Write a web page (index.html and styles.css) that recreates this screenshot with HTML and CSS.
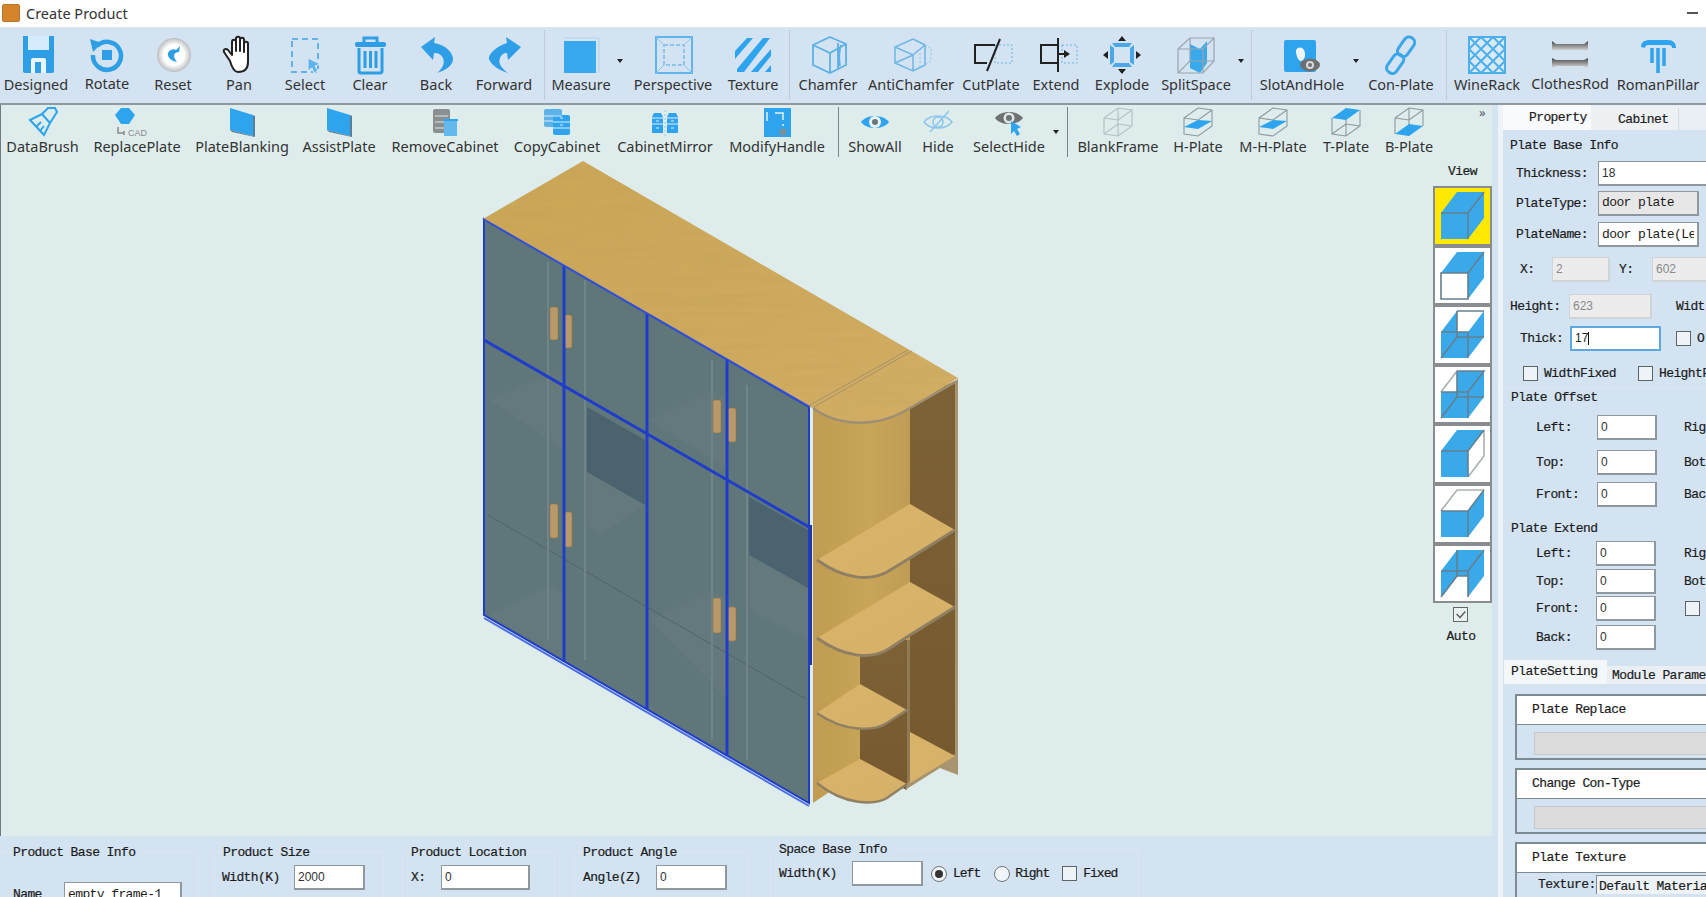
FILE: index.html
```html
<!DOCTYPE html>
<html lang="en">
<head>
<meta charset="utf-8">
<title>Create Product</title>
<link rel="stylesheet" href="styles.css">
</head>
<body>
<div class="app">
  <header class="titlebar">
    <span class="appicon"></span><span class="apptitle">Create Product</span><span class="minimize"></span>
  </header>

  <nav class="ribbon">
    <div class="tool w72"><svg class="ico" viewBox="0 0 40 40"><path d="M7 1H38V36Q38 38 36 38H9Q7 38 7 36Z" fill="#2e9fe6"/><rect x="12" y="1" width="21" height="14" fill="#d4ecfb"/><path d="M15 38V25Q15 23 17 23H28Q30 23 30 25V38Z" fill="#eaf4fb"/><rect x="19" y="27" width="6" height="11" fill="#2e9fe6"/></svg><span class="label">Designed</span></div>
    <div class="tool w70 up"><svg class="ico" viewBox="0 0 40 40"><path d="M10 11A14 14 0 1 1 6 20" fill="none" stroke="#2e9fe6" stroke-width="4.5"/><path d="M3 4L15 8 6 17Z" fill="#2e9fe6"/><rect x="15" y="15" width="10" height="10" fill="#2e9fe6"/></svg><span class="label">Rotate</span></div>
    <div class="tool w62"><svg class="ico" viewBox="0 0 40 40"><defs><radialGradient id="ball" cx=".5" cy=".5" r=".55"><stop offset=".55" stop-color="#fff"/><stop offset="1" stop-color="#a9adb0"/></radialGradient></defs><circle cx="21" cy="20" r="17" fill="url(#ball)"/><path d="M27 11L26 17C21 17 19 21 24 27 18 26 14 22 15 18 16 15 21 13 23 15Z" fill="#2e9fe6"/></svg><span class="label">Reset</span></div>
    <div class="tool w70"><svg class="ico" viewBox="0 0 40 40"><path d="M11 26L5 17C4 14 7 13 9 15L13 20V7C13 4 17 4 17 7V16 4C17 1 21 1 21 4V16 5C21 2 25 2 25 5V17 9C25 6 29 6 29 9V27C29 34 25 37 19 37 15 37 13 33 11 26Z" fill="#fff" stroke="#222" stroke-width="2" stroke-linejoin="round"/></svg><span class="label">Pan</span></div>
    <div class="tool w62"><svg class="ico" viewBox="0 0 40 40"><rect x="7" y="4" width="26" height="33" fill="none" stroke="#62b3ec" stroke-width="2" stroke-dasharray="6 4"/><path d="M23 23L35 29 30 31 33 36 29 38 27 33 23 36Z" fill="#5fb3ee" stroke="#dbe9f5"/></svg><span class="label">Select</span></div>
    <div class="tool w68"><svg class="ico" viewBox="0 0 40 40"><path d="M14 8V3H27V8" fill="none" stroke="#2e9fe6" stroke-width="3"/><rect x="5" y="7" width="31" height="5" rx="2" fill="#2e9fe6"/><path d="M9 13V36Q9 38 11 38H30Q32 38 32 36V13M15 16V33M20.500 16V33M26 16V33" fill="none" stroke="#2e9fe6" stroke-width="3"/></svg><span class="label">Clear</span></div>
    <div class="tool w64"><svg class="ico" viewBox="0 0 40 40"><path d="M5 12L19 2 18 8C30 10 37 18 37 24 37 31 28 36 21 38 27 33 29 28 27 23 25 19 22 18 18 18L17 25Z" fill="#2e9fe6"/></svg><span class="label">Back</span></div>
    <div class="tool w72"><svg class="ico" viewBox="0 0 40 40"><path d="M37 12L22 2 23 8C11 12 4 20 5 24 7 30 16 36 24 38 17 33 14 28 16 23 18 19 20 18 23 18L24 25Z" fill="#2e9fe6"/></svg><span class="label">Forward</span></div>
    <i class="sep ml4 mr2"></i>
    <div class="tool w68"><svg class="ico" viewBox="0 0 40 40"><rect x="3" y="6" width="32" height="32" fill="#39a9ee"/><path d="M3 3H38V38" fill="none" stroke="#b5d2e8"/></svg><span class="label">Measure</span></div>
    <i class="caretdown w10"></i>
    <div class="tool w96"><svg class="ico" viewBox="0 0 40 40"><rect x="3" y="2" width="36" height="36" fill="none" stroke="#5fb5ee" stroke-width="2"/><rect x="11" y="10" width="20" height="20" fill="none" stroke="#8cc6ee" stroke-width="2" stroke-dasharray="4 2"/><path d="M3 2L11 10M39 2L31 10M3 38L11 30M39 38L31 30" stroke="#8cc6ee"/></svg><span class="label">Perspective</span></div>
    <div class="tool w64"><svg class="ico" viewBox="0 0 40 40"><path d="M2 16L14 3H20L2 24ZM4 34L30 3H37L11 37H4ZM18 37L38 14V21L25 37ZM32 37L38 30V37Z" fill="#2ea3ee"/></svg><span class="label">Texture</span></div>
    <i class="sep ml4"></i>
    <div class="tool w76"><svg class="ico shift" viewBox="0 0 40 40"><path d="M20 2L36 9V30L20 38 3 30V10ZM3 10L20 18 36 9M20 18V38M28 8V34M31 10Q28 20 30 31" fill="none" stroke="#5db0e6" stroke-width="1.800"/></svg><span class="label">Chamfer</span></div>
    <div class="tool w90"><svg class="ico shift" viewBox="0 0 40 40"><path d="M20 4L32 10V30L20 36 2 28V12ZM2 12L20 20 32 10M20 20V36M2 28L20 20" fill="none" stroke="#6db6e6" stroke-width="1.500"/><path d="M32 10L38 13V26L32 30M27 14V32" fill="none" stroke="#8cc6ee" stroke-dasharray="2 2"/></svg><span class="label">AntiChamfer</span></div>
    <div class="tool w70"><svg class="ico shift" viewBox="0 0 40 40"><rect x="22" y="10" width="17" height="18" fill="none" stroke="#6db6e6" stroke-dasharray="2 2"/><path d="M22 10H2V28H14M27 4L14 36" fill="none" stroke="#222" stroke-width="2"/></svg><span class="label">CutPlate</span></div>
    <div class="tool w60"><svg class="ico shift" viewBox="0 0 40 40"><rect x="24" y="10" width="15" height="18" fill="none" stroke="#6db6e6" stroke-dasharray="2 2"/><path d="M21 10H3V28H21M20 3V37M20 19H27" fill="none" stroke="#222" stroke-width="2"/><path d="M26 15L32 19 26 23Z" fill="#222"/></svg><span class="label">Extend</span></div>
    <div class="tool w72"><svg class="ico" viewBox="0 0 40 40"><path d="M10 8H30L27 12H13ZM10 32H30L27 28H13ZM8 10L12 13V27L8 30ZM32 10L28 13V27L32 30Z" fill="#4aa8e8"/><path d="M20 1L24 6H16ZM20 39L16 34H24ZM1 20L6 16V24ZM39 20L34 24V16Z" fill="#222"/></svg><span class="label">Explode</span></div>
    <div class="tool w76"><svg class="ico" viewBox="0 0 40 40"><path d="M14 9L24 14 31 6V28L24 38 14 33Z" fill="#39a9ee"/><path d="M2 14L14 3H38V26L27 38H2ZM2 14H27L38 3M27 14V38M14 3V26L2 38M14 26H38" fill="none" stroke="#9aa6ad" stroke-width="1.200"/></svg><span class="label">SplitSpace</span></div>
    <i class="caretdown w14"></i>
    <i class="sep ml3"></i>
    <div class="tool w100"><svg class="ico" viewBox="0 0 40 40"><rect x="2" y="5" width="32" height="32" rx="2" fill="#2ea3ee"/><path d="M14 16C14 12 20 11 22 15 24 19 23 25 19 26 16 26 14 20 14 16Z" fill="#eef6fc"/><ellipse cx="28" cy="30" rx="10" ry="6.500" fill="#6c7072"/><circle cx="28" cy="30" r="4" fill="#d8d8d8"/><circle cx="28" cy="30" r="2" fill="#6c7072"/></svg><span class="label">SlotAndHole</span></div>
    <i class="caretdown w8"></i>
    <div class="tool w82"><svg class="ico" viewBox="0 0 40 40"><g fill="none" stroke="#3aa6e8" stroke-width="3"><rect x="20" y="1" width="11" height="21" rx="5" transform="rotate(35 25 11)"/><rect x="9" y="18" width="11" height="21" rx="5" transform="rotate(35 14 28)"/></g></svg><span class="label">Con-Plate</span></div>
    <i class="sep ml4"></i>
    <div class="tool w80"><svg class="ico" viewBox="0 0 40 40"><rect x="2" y="2" width="36" height="36" fill="#dbe9f5" stroke="#4cb0ee" stroke-width="2"/><path d="M2 14L14 2M2 26L26 2M2 38L38 2M14 38L38 14M26 38L38 26M2 26L14 38M2 14L26 38M2 2L38 38M14 2L38 26M26 2L38 14" stroke="#4cb0ee" stroke-width="2"/></svg><span class="label">WineRack</span></div>
    <div class="tool w86 up"><svg class="ico" viewBox="0 0 40 40"><defs><linearGradient id="rod" x1="0" y1="0" x2="0" y2="1"><stop offset="0" stop-color="#444"/><stop offset=".5" stop-color="#999"/><stop offset="1" stop-color="#eee"/></linearGradient></defs><path d="M2 6L6 9H34L38 6V17L34 15H6L2 17Z" fill="url(#rod)"/><path d="M2 23L6 25H34L38 23V34L34 31H6L2 34Z" fill="url(#rod)"/></svg><span class="label">ClothesRod</span></div>
    <div class="tool w90"><svg class="ico" viewBox="0 0 40 40"><path d="M3 12C3 6 8 5 12 5H30C35 5 38 8 38 13H34C34 10 32 10 30 10H11C8 10 7 11 7 13Z" fill="#2ea3ee"/><path d="M14 13V28M20 13V38M26 13V31" stroke="#2ea3ee" stroke-width="3.500" fill="none"/></svg><span class="label">RomanPillar</span></div>
  </nav>

  <div class="main">
    <div class="left">
      <section class="workspace">
        <svg class="scene" viewBox="0 105 1492 731">
          <defs>
            <linearGradient id="topwood" x1="0" y1="0" x2="1" y2="1"><stop offset="0" stop-color="#cba657"/><stop offset=".6" stop-color="#cfaa5e"/><stop offset="1" stop-color="#d3af66"/></linearGradient>
            <linearGradient id="sidewood" x1="0" y1="0" x2="1" y2="0"><stop offset="0" stop-color="#c09c52"/><stop offset=".6" stop-color="#c9a559"/><stop offset="1" stop-color="#bf9c55"/></linearGradient>
            <linearGradient id="shelfwood" x1="0" y1="0" x2="1" y2="1"><stop offset="0" stop-color="#d8b469"/><stop offset="1" stop-color="#d6b068"/></linearGradient>
            <linearGradient id="dark" x1="0" y1="0" x2="0" y2="1"><stop offset="0" stop-color="#7d6137"/><stop offset="1" stop-color="#76592f"/></linearGradient>
            <filter id="grain" x="0" y="0" width="100%" height="100%"><feTurbulence type="fractalNoise" baseFrequency=".012 .16" numOctaves="2" seed="4"/><feColorMatrix values="0 0 0 0 .45  0 0 0 0 .3  0 0 0 0 .1  0 0 0 .3 -.09"/><feComposite in2="SourceGraphic" operator="in"/><feMerge><feMergeNode in="SourceGraphic"/><feMergeNode/></feMerge></filter>
          </defs>

          <!-- right open unit -->
          <path d="M955 383L958 378V775L955 772Z" fill="#a8946e"/>
          <path d="M905 405L955 381V757L905 787Z" fill="url(#dark)"/>
          <path d="M813 408C835 425 875 430 910 408V640L907 786 860 770 825 795 813 803Z" fill="url(#sidewood)"/>
          <path d="M860 640H907V790L860 770Z" fill="url(#dark)"/>
          <path d="M907 640H910V786H907Z" fill="#8e7a55"/>
          <!-- shelves -->
          <path d="M958 775L955 754 908 782 905 790 940 768Z" fill="#a8946e"/>
          <path d="M910 732L955 756 910 783Z" fill="url(#shelfwood)"/>
          <g fill="url(#shelfwood)">
            <path d="M817 783L860 759 907 784 887 798C875 805 845 806 817 783Z"/>
            <path d="M817 713L860 684 907 710 887 723C875 731 845 733 817 713Z"/>
            <path d="M817 638L910 582 955 607 910 635 887 650C870 659 845 658 817 638Z"/>
            <path d="M817 560L910 504 955 530 910 558 887 572C870 581 845 580 817 560Z"/>
          </g>
          <g fill="none" stroke="#8f8064" stroke-linejoin="round">
            <path d="M817 783C845 806 875 805 887 798L907 784" stroke-width="2.500"/>
            <path d="M817 713C845 733 875 731 887 723L907 710" stroke-width="2.500"/>
            <path d="M817 638C845 658 870 659 887 650L910 635 955 607" stroke-width="3"/>
            <path d="M817 560C845 580 870 581 887 572L910 558 955 530" stroke-width="3"/>
          </g>

          <!-- glass doors -->
          <path d="M483 219L809 406V803L483 615Z" fill="#607779"/>
          <path d="M587 407L645 440V505L587 472ZM749 497L808 530V588L749 555Z" fill="#4a636e"/>
          <path d="M490 400L550 372 564 380V450ZM650 420L712 390 727 398V470ZM490 615L550 585 564 593V660ZM587 472L645 505 600 535 587 525ZM650 620L712 590 727 598V700ZM750 555L808 588 808 640 750 610Z" fill="#6b7d80" opacity=".3"/>
          <path d="M488 515L806 699" stroke="#506569" fill="none"/>
          <path d="M548 262V640M585 280V660M712 360V740M747 385V760" stroke="#708588" stroke-width="2" fill="none"/>
          <!-- door handles -->
          <g fill="#b9996a" stroke="#93713f" stroke-width=".5">
            <rect x="550" y="307" width="8" height="33" rx="2"/><rect x="564" y="315" width="8" height="33" rx="2"/>
            <rect x="713" y="400" width="8" height="33" rx="2"/><rect x="728" y="408" width="8" height="34" rx="2"/>
            <rect x="550" y="504" width="8" height="34" rx="2"/><rect x="564" y="512" width="8" height="35" rx="2"/>
            <rect x="713" y="598" width="8" height="35" rx="2"/><rect x="728" y="607" width="8" height="34" rx="2"/>
          </g>
          <!-- selection outline -->
          <g fill="none" stroke="#1f3ccb" stroke-width="2">
            <path d="M484 219L809 407V803L484 615Z"/>
            <path d="M484 340L809 527" stroke-width="3"/>
            <path d="M564 266V662M647 313V709M727 359V756" stroke-width="3"/>
            <path d="M484 618L809 806" stroke="#4c6ee0"/>
            <path d="M811 525V665" stroke="#26389a"/>
          </g>
          <!-- top board -->
          <path d="M583 161L958 378 910 408C875 430 835 425 813 408L810 407 483 219Z" fill="url(#topwood)" filter="url(#grain)"/>
          <path d="M813 408C835 425 875 430 910 408L957 381" fill="none" stroke="#9c8f73" stroke-width="2.500"/>
          <path d="M912 351L814 407M908 350L810 405" stroke="#a8926a" fill="none"/>
          <path d="M483 219L810 407" stroke="#3350d8" stroke-width="2" fill="none"/>
        </svg>

        <div class="toolbar2">
          <div class="tool2 w83"><svg class="ico2" viewBox="0 0 30 30"><g fill="none" stroke="#2ea3ee" stroke-width="2"><path d="M2 13L14 7 22 16 16 28Z"/><path d="M14 7L20 1 27 1 29 5 22 16M8 20L13 15M12 24L16 19"/></g></svg><span class="label">DataBrush</span></div>
          <div class="tool2 w106"><svg class="ico2 wide" viewBox="0 0 50 30"><path d="M9 1H17L23 8 17 17H9L3 8Z" fill="#2ea3ee"/><path d="M6 20V26H12M12 24V28" fill="none" stroke="#8a8a8a" stroke-width="1.500"/><text class="cad" x="16" y="29">CAD</text></svg><span class="label">ReplacePlate</span></div>
          <div class="tool2 w104"><svg class="ico2" viewBox="0 0 30 30"><path d="M3 1L26 8V29L3 23Z" fill="#2ea3ee"/><path d="M26 8L28 9V30L26 29ZM3 23L26 29 28 30 5 25Z" fill="#5d7d94"/></svg><span class="label">PlateBlanking</span></div>
          <div class="tool2 w90"><svg class="ico2" viewBox="0 0 30 30"><path d="M3 1L26 8V29L3 23Z" fill="#2ea3ee"/><path d="M26 8L28 9V30L26 29ZM3 23L26 29 28 30 5 25Z" fill="#5d7d94"/></svg><span class="label">AssistPlate</span></div>
          <div class="tool2 w122"><svg class="ico2" viewBox="0 0 30 30"><rect x="3" y="2" width="17" height="24" rx="2" fill="#8a8f92"/><path d="M5 9H18M5 15H18M5 21H18" stroke="#e2e6e8"/><rect x="14" y="14" width="13" height="15" fill="#63b8ee"/><path d="M13 13H28" stroke="#2ea3ee" stroke-width="2"/></svg><span class="label">RemoveCabinet</span></div>
          <div class="tool2 w102"><svg class="ico2" viewBox="0 0 30 30"><rect x="2" y="2" width="18" height="18" rx="2" fill="#5cb3ea"/><rect x="11" y="8" width="17" height="20" rx="2" fill="#2ea3ee"/><path d="M2 9H20M2 14H11M11 15H28M11 21H28M18 11H21M18 18H21" stroke="#e2eef8"/></svg><span class="label">CopyCabinet</span></div>
          <div class="tool2 w114"><svg class="ico2" viewBox="0 0 30 30"><path d="M2 10L4 6H11L13 10V26H2ZM17 10L19 6H26L28 10V26H17Z" fill="#2ea3ee"/><path d="M2 11H13M2 17H13M17 11H28M17 17H28M6 14H9M6 21H9M21 14H24M21 21H24" stroke="#e2eef8"/><path d="M15 3V29" stroke="#9ac8ea" stroke-dasharray="2 2"/></svg><span class="label">CabinetMirror</span></div>
          <div class="tool2 w110"><svg class="ico2" viewBox="0 0 30 30"><rect x="2" y="1" width="27" height="29" fill="#2ea3ee"/><path d="M5 5V14M13 6H21V13M21 17V19" fill="none" stroke="#eaf4fb" stroke-width="1.500"/><circle cx="21" cy="25" r="3.500" fill="#7d8f9a"/></svg><span class="label">ModifyHandle</span></div>
          <i class="sep2 ml6"></i>
          <div class="tool2 w72"><svg class="ico2" viewBox="0 0 30 30"><path d="M1 15C7 7 23 7 29 15 23 23 7 23 1 15Z" fill="#2ea3ee"/><circle cx="15" cy="15" r="6" fill="#eaf4fb"/><circle cx="15" cy="15" r="3" fill="#6d7478"/></svg><span class="label">ShowAll</span></div>
          <div class="tool2 w54"><svg class="ico2" viewBox="0 0 30 30"><path d="M1 15C7 7 23 7 29 15 23 23 7 23 1 15Z" fill="none" stroke="#8cc6ee" stroke-width="1.500"/><circle cx="15" cy="15" r="5" fill="none" stroke="#8cc6ee" stroke-width="1.500"/><path d="M7 25L26 4" stroke="#8cc6ee" stroke-width="1.500"/></svg><span class="label">Hide</span></div>
          <div class="tool2 w88"><svg class="ico2" viewBox="0 0 30 30"><path d="M1 11C7 3 23 3 29 11 23 19 7 19 1 11Z" fill="#6e7274"/><circle cx="15" cy="11" r="5.500" fill="#dfe5e6"/><circle cx="15" cy="11" r="3" fill="#6e7274"/><path d="M17 14L27 20 23 22 26 27 23 29 20 24 17 27Z" fill="#2ea3ee"/></svg><span class="label">SelectHide</span></div>
          <i class="caretdown2 w6"></i>
          <i class="sep2 ml8"></i>
          <div class="tool2 w100"><svg class="ico2" viewBox="0 0 30 30"><path class="wire pale" d="M1 11L15 1 29 3V19L15 29 1 27ZM1 11L15 13 29 3M15 13V29M15 1V17L1 27M15 17L29 19"/></svg><span class="label">BlankFrame</span></div>
          <div class="tool2 w60"><svg class="ico2" viewBox="0 0 30 30"><path class="wire" d="M1 11L15 1 29 3V19L15 29 1 27ZM1 11L15 13 29 3"/><path d="M1 20L15 13 29 14 15 22Z" fill="#2ea3ee"/></svg><span class="label">H-Plate</span></div>
          <div class="tool2 w90"><svg class="ico2" viewBox="0 0 30 30"><path class="wire" d="M1 11L15 1 29 3V19L15 29 1 27ZM1 11L15 13 29 3"/><path d="M1 20L15 13 29 14 15 22Z" fill="#2ea3ee"/></svg><span class="label">M-H-Plate</span></div>
          <div class="tool2 w56"><svg class="ico2" viewBox="0 0 30 30"><path class="wire" d="M1 11V27L15 29 29 19V3M15 13V29M15 1V17L1 27M15 17L29 19"/><path d="M1 11L15 1 29 3 15 13Z" fill="#2ea3ee"/></svg><span class="label">T-Plate</span></div>
          <div class="tool2 w70"><svg class="ico2" viewBox="0 0 30 30"><path class="wire" d="M1 11L15 1 29 3V19M1 11V27M1 11L15 13 29 3M15 13V29M15 1V17"/><path d="M1 27L15 17 29 19 15 29Z" fill="#2ea3ee"/></svg><span class="label">B-Plate</span></div>
          <span class="more">&raquo;</span>
        </div>

        <div class="stage">
          <aside class="viewcol">
            <div class="viewtitle mono">View</div>
            <div class="viewbtn active"><svg class="cube" viewBox="0 0 59 59"><path d="M8 27L24 6H51V32L35 53H8Z" class="b"/><path class="l" d="M8 27H35L51 6M35 27V53"/></svg></div>
            <div class="viewbtn"><svg class="cube" viewBox="0 0 59 59"><path d="M8 27L24 6H51V32L35 53V27Z" class="b"/><path class="l" d="M8 27H35V53H8ZM35 27L51 6"/></svg></div>
            <div class="viewbtn"><svg class="cube" viewBox="0 0 59 59"><path d="M8 27L24 6V27H35L51 6V32L35 53H8Z" class="b"/><path class="l" d="M24 6H51M24 6V32H51M8 27H35V53M8 53L24 32"/></svg></div>
            <div class="viewbtn"><svg class="cube" viewBox="0 0 59 59"><path d="M24 27V6H51V32L35 53H8V27Z" class="b"/><path class="g" d="M8 27L24 6"/><path class="l" d="M24 6V32H51M8 27H35V53M8 53L24 32M24 6H51L35 27"/></svg></div>
            <div class="viewbtn"><svg class="cube" viewBox="0 0 59 59"><path d="M8 27L24 6H51L35 27V53H8Z" class="b"/><path class="g" d="M35 53L51 32V6"/><path class="l" d="M8 27H35L51 6M35 27V53"/></svg></div>
            <div class="viewbtn"><svg class="cube" viewBox="0 0 59 59"><path d="M8 27H35L51 6V32L35 53H8Z" class="b"/><path class="g" d="M8 27L24 6H51"/><path class="l" d="M8 27H35L51 6M35 27V53"/></svg></div>
            <div class="viewbtn"><svg class="cube" viewBox="0 0 59 59"><path d="M8 27L24 6H51V32L35 53V32H24L8 53Z" class="b"/><path class="l" d="M24 6V32H35M8 27H35V53M35 27L51 6M24 32L8 53"/></svg></div>
            <span class="autocheck"><svg viewBox="0 0 15 15"><path d="M3 7L7 11 13 4" fill="none" stroke="#555" stroke-width="1.500"/></svg></span>
            <div class="autolabel mono">Auto</div>
          </aside>
        </div>
      </section>

      <section class="infobar mono">
        <div class="ibox b1"><span class="legend">Product Base Info</span><div class="irow mt21 pl13"><span class="w51">Name</span><input class="fld w118 txt" value="empty frame-1" readonly></div></div>
        <div class="ibox b2"><span class="legend">Product Size</span><div class="irow pl8"><span class="w72t">Width(K)</span><input class="fld w71" value="2000" readonly></div></div>
        <div class="ibox b3"><span class="legend">Product Location</span><div class="irow pl9"><span class="w30">X:</span><input class="fld w89" value="0" readonly></div></div>
        <div class="ibox b4"><span class="legend">Product Angle</span><div class="irow pl9"><span class="w73">Angle(Z)</span><input class="fld w71" value="0" readonly></div></div>
        <div class="ibox b5"><span class="legend">Space Base Info</span><div class="irow pl9 mt3">
          <span class="w73">Width(K)</span><input class="fld w71" value="" readonly>
          <span class="radio on ml8"></span><span class="ml6 tight">Left</span>
          <span class="radio ml14"></span><span class="ml5 tight">Right</span>
          <span class="cb ml13"></span><span class="ml6 tight">Fixed</span>
        </div></div>
      </section>
    </div>

    <aside class="panel mono">
      <div class="tabs">
        <div class="tab sel">Property</div><div class="tab">Cabinet</div>
      </div>
      <div class="sectitle h24 pl8">Plate Base Info</div>
      <div class="row h30 pl13"><span class="w82">Thickness:</span><input class="fld over" value="18" readonly></div>
      <div class="row h30 pl13"><span class="w82">PlateType:</span><input class="fld w101 txt grey" value="door plate" readonly></div>
      <div class="row h33 pl13"><span class="w82">PlateName:</span><input class="fld w101 txt" value="door plate(Le" readonly></div>
      <div class="row h36 pl17"><span class="w32">X:</span><input class="fld dis w58" value="2" readonly><span class="w33 ml9">Y:</span><input class="fld dis over" value="602" readonly></div>
      <div class="row h38 pl8"><span class="w59">Height:</span><input class="fld dis w83" value="623" readonly><span class="ml24">Widt</span></div>
      <div class="row h26 pl17"><span class="w50">Thick:</span><span class="fld focus w91">17<i class="textcaret"></i></span><span class="cb ml15"></span><span class="ml6">O:</span></div>
      <div class="row h28 mt8 pl20"><span class="cb"></span><span class="ml6 w94">WidthFixed</span><span class="cb"></span><span class="ml6">HeightF</span></div>

      <div class="sectitle h20 pl9 line">Plate Offset</div>
      <div class="row h41 pl33"><span class="w61">Left:</span><input class="fld w60" value="0" readonly><span class="ml27">Rig</span></div>
      <div class="row h29 pl33"><span class="w61">Top:</span><input class="fld w60" value="0" readonly><span class="ml27">Bot</span></div>
      <div class="row h35 pl33"><span class="w61">Front:</span><input class="fld w60" value="0" readonly><span class="ml27">Bac</span></div>

      <div class="sectitle h20 pl9 mt7">Plate Extend</div>
      <div class="row h28 pl33"><span class="w60">Left:</span><input class="fld w60" value="0" readonly><span class="ml28">Rig</span></div>
      <div class="row h28 pl33"><span class="w60">Top:</span><input class="fld w60" value="0" readonly><span class="ml28">Bot</span></div>
      <div class="row h26 pl33"><span class="w60">Front:</span><input class="fld w60" value="0" readonly><span class="cb ml29"></span></div>
      <div class="row h32 pl33"><span class="w60">Back:</span><input class="fld w60" value="0" readonly></div>

      <div class="tabs2">
        <div class="tab2 sel">PlateSetting</div><div class="tab2">Module Parame</div>
      </div>
      <div class="setting">
        <div class="setbox"><div class="sethead">Plate Replace</div><div class="setbody"><div class="setbar"></div></div></div>
        <div class="setbox"><div class="sethead">Change Con-Type</div><div class="setbody"><div class="setbar"></div></div></div>
        <div class="setbox"><div class="sethead">Plate Texture</div><div class="setbody tex"><span class="w58">Texture:</span><span class="texval">Default Materia</span></div></div>
      </div>
    </aside>
  </div>
</div>
</body>
</html>
```

FILE: styles.css
```css
* { box-sizing: border-box; }
html, body { margin: 0; height: 100%; overflow: hidden; background: #fff; }
body { font-family: "Noto Sans", "Liberation Sans", sans-serif; color: #2b2b2b; }
.app { width: 1706px; height: 897px; display: flex; flex-direction: column; overflow: hidden; }

/* title bar */
.titlebar { height: 28px; flex: none; display: flex; align-items: center; padding-bottom: 1px; background: #fff; border-bottom: 1px solid #dfe4e8; }
.appicon { width: 18px; height: 18px; margin-left: 2px; border-radius: 2px; background: #d5842c; border: 1px solid #b8752e; }
.apptitle { margin-left: 6px; font-size: 14.5px; line-height: 18px; color: #333; }
.minimize { width: 11px; height: 2px; background: #555; margin-left: auto; margin-right: 8px; }

/* shared tool */
.label { display: block; height: 20px; line-height: 18px; font-size: 14.5px; text-align: center; white-space: nowrap; color: #333; }
.ribbon { height: 77px; flex: none; display: flex; background: #d3e3f2; border-bottom: 2px solid #8f999f; }
.tool { flex: none; padding-top: 7px; display: flex; flex-direction: column; align-items: center; }
.tool.up .label { margin-top: -1px; }
.ico { width: 40px; height: 40px; display: block; flex: none; }
.ico.shift { margin-left: 4px; }
.ico2 { width: 30px; height: 30px; display: block; flex: none; }
.ico2.wide { width: 50px; }
.wire { fill: none; stroke: #8a9aa0; stroke-width: 1.100; }
.wire.pale { stroke: #b4bfc2; }
.cad { font: 9px "Liberation Sans", sans-serif; fill: #8a8a8a; }
.sep { flex: none; width: 1px; height: 70px; margin-top: 2px; background: #bfcbd5; }
.sep2 { flex: none; width: 1px; height: 50px; margin-top: 2px; background: #78858b; }
.caretdown, .caretdown2 { flex: none; position: relative; display: block; height: 10px; }
.caretdown { margin-top: 31px; }
.caretdown2 { margin-top: 25px; }
.caretdown::after, .caretdown2::after { content: ""; position: absolute; left: 50%; top: 0; margin-left: -3px; border: 3px solid transparent; border-top: 4px solid #222; border-bottom: 0; }

/* main */
.main { flex: 1; min-height: 0; display: flex; }
.left { width: 1498px; flex: none; display: flex; flex-direction: column; background: #d5e4f2; }
.workspace { position: relative; width: 1492px; height: 731px; flex: none; display: flex; flex-direction: column; background: #deedec; border-left: 1px solid #6f7a80; }
.scene { position: absolute; left: -1px; top: 0; width: 1492px; height: 731px; }
.toolbar2 { position: relative; height: 56px; flex: none; display: flex; }
.tool2 { flex: none; padding-top: 2px; display: flex; flex-direction: column; align-items: center; }
.more { position: absolute; left: 1478px; top: -2px; font-size: 13px; color: #556; }

/* view column */
.stage { position: relative; flex: 1; display: flex; justify-content: flex-end; }
.viewcol { width: 59px; display: flex; flex-direction: column; align-items: stretch; }
.viewtitle { height: 22px; line-height: 22px; text-align: center; }
.viewbtn { height: 59.6px; border: 2px solid #8a8d8f; background: #fff; margin-top: 0; }
.viewtitle + .viewbtn { margin-top: 3px; }
.viewbtn.active { background: #ffe900; }
.cube { display: block; width: 59px; height: 59px; margin: -2px; }
.cube .b { fill: #3aa9ea; }
.cube .l { fill: none; stroke: #667f8e; stroke-width: 1.600; }
.cube .g { fill: none; stroke: #a9b0b3; stroke-width: 1.600; }
.autocheck { width: 15px; height: 15px; margin: 4px 0 0 20px; border: 1px solid #666; background: #eaf1f2; display: block; }
.autocheck svg { display: block; width: 13px; height: 13px; }
.autolabel { height: 18px; line-height: 18px; margin: 6px 0 0 -3px; text-align: center; }

/* monospace forms */
.mono { font-family: "Liberation Mono", "DejaVu Sans Mono", monospace; font-size: 13px; letter-spacing: -.6px; color: #1c1c1c; -webkit-text-stroke: .2px #1c1c1c; }
.tight { letter-spacing: -1px; }
.fld { display: block; flex: none; height: 25px; padding: 0 3px; border: 1px solid #8f989e; border-bottom-width: 2px; border-right-width: 2px; background: #fff; font: 12px "Liberation Sans", sans-serif; letter-spacing: 0; -webkit-text-stroke: 0; color: #333; outline: 0; border-radius: 0; }
.fld.txt { font-family: "Liberation Mono", monospace; font-size: 13px; letter-spacing: -.6px; color: #1c1c1c; }
.fld.grey { background: #e7e7e7; }
.fld.dis { background: #ececec; border-color: #cfd4d8; color: #8a8a8a; }
.fld.over { width: 160px; }
.fld.focus { display: flex; align-items: center; border: 2px solid #5da8dc; color: #222; }
.textcaret { width: 1px; height: 13px; background: #111; }
.cb { display: block; flex: none; width: 15px; height: 15px; border: 1px solid #5d6468; background: #eef3f7; }
.radio { display: block; flex: none; width: 16px; height: 16px; border-radius: 50%; border: 1px solid #6d7478; background: #f3f6f9; position: relative; }
.radio.on::after { content: ""; position: absolute; left: 3px; top: 3px; width: 8px; height: 8px; border-radius: 50%; background: #333; }

/* bottom info */
.infobar { flex: 1; display: flex; overflow: hidden; align-items: flex-start; background: #d3e3f2; white-space: nowrap; }
.ibox { flex: none; height: 80px; margin-top: 16px; border: 1px solid #dce6ef; }
.legend { display: block; width: max-content; height: 16px; line-height: 16px; margin: -8px 0 0 8px; padding-right: 3px; background: #d3e3f2; }
.b1 { width: 199px; border-left: 0; }
.b1 .legend { margin-left: 13px; }
.b2 { width: 170px; margin-left: 15px; }
.b3 { width: 153px; margin-left: 18px; }
.b4 { width: 175px; margin-left: 19px; }
.b5 { width: 369px; margin-left: 21px; margin-top: 13px; }
.irow { display: flex; align-items: center; margin-top: 4px; }
.pl8 { padding-left: 7px; }
.pl9 { padding-left: 8px; }
.pl13 { padding-left: 13px; }
.mt21 { margin-top: 21px; }
.mt3 { margin-top: 3px; }
.mt7 { margin-top: 7px; }
.mt8 { margin-top: 8px; }

/* widths */
.w6 { width: 6px; } .w8 { width: 8px; } .w10 { width: 10px; } .w14 { width: 14px; }
.w30 { width: 30px; flex: none; } .w32 { width: 32px; flex: none; } .w33 { width: 33px; flex: none; }
.w50 { width: 50px; flex: none; } .w51 { width: 51px; flex: none; } .w54 { width: 54px; flex: none; }
.w56 { width: 56px; flex: none; } .w58 { width: 58px; flex: none; } .w59 { width: 59px; flex: none; }
.w60 { width: 60px; flex: none; } .w61 { width: 61px; flex: none; } .w62 { width: 62px; }
.w64 { width: 64px; } .w68 { width: 68px; } .w70 { width: 70px; flex: none; } .w71 { width: 71px; flex: none; }
.w72 { width: 72px; } .w72t { width: 72px; flex: none; } .w73 { width: 73px; flex: none; } .w76 { width: 76px; }
.w80 { width: 80px; } .w82 { width: 82px; flex: none; } .w83 { width: 83px; flex: none; } .w86 { width: 86px; }
.w88 { width: 88px; } .w89 { width: 89px; flex: none; } .w90 { width: 90px; } .w91 { width: 91px; flex: none; }
.w94 { width: 94px; flex: none; } .w96 { width: 96px; } .w100 { width: 100px; }
.w101 { width: 101px; flex: none; } .w102 { width: 102px; } .w104 { width: 104px; } .w106 { width: 106px; }
.w110 { width: 110px; } .w114 { width: 114px; } .w118 { width: 118px; flex: none; } .w122 { width: 122px; }
.ml3 { margin-left: 3px; } .ml4 { margin-left: 4px; } .ml5 { margin-left: 5px; } .ml6 { margin-left: 6px; }
.mr2 { margin-right: 2px; }
.ml8 { margin-left: 8px; } .ml9 { margin-left: 9px; } .ml13 { margin-left: 13px; } .ml14 { margin-left: 14px; } .ml15 { margin-left: 15px; }
.ml24 { margin-left: 24px; } .ml27 { margin-left: 27px; } .ml28 { margin-left: 28px; } .ml29 { margin-left: 29px; }
.h20 { height: 20px; } .h24 { height: 24px; } .h26 { height: 26px; } .h28 { height: 28px; } .h29 { height: 29px; }
.h30 { height: 30px; } .h32 { height: 32px; } .h33 { height: 33px; } .h35 { height: 35px; } .h36 { height: 36px; }
.h38 { height: 38px; } .h41 { height: 41px; }
.pl17 { padding-left: 17px; } .pl20 { padding-left: 20px; } .pl33 { padding-left: 33px; }

/* right panel */
.panel { width: 208px; flex: none; overflow: hidden; background: #d3e3f2; border-left: 5px solid #eef3f8; white-space: nowrap; }
.tabs { display: flex; align-items: flex-end; height: 29px; padding-bottom: 4px; margin-left: -4px; background: linear-gradient(#e9eff5 25px, #d3e3f2 25px); }
.tab { width: 88px; height: 22px; line-height: 24px; padding-left: 27px; background: #eef1f4; border-right: 1px solid #d5dadf; }
.tab.sel { width: 92px; height: 25px; line-height: 25px; padding-left: 30px; background: #f8fafc; border-right: 0; }
.row { display: flex; align-items: center; }
.sectitle { line-height: 24px; }
.sectitle.h20 { line-height: 20px; }
.sectitle.line { border-top: 1px solid #dce6ef; }
.tabs2 { display: flex; align-items: flex-end; height: 24px; margin: 7px 0 0 1px; }
.tab2 { flex: 1; height: 18px; line-height: 20px; padding-left: 5px; background: #e9eff5; }
.tab2.sel { flex: none; width: 103px; height: 24px; line-height: 24px; padding-left: 7px; background: #f4f7fa; }
.setting { padding: 10px 0 0 12px; }
.setbox { width: 260px; height: 66px; margin-bottom: 8px; border: 2px solid #7e8a92; border-right: 0; }
.sethead { height: 29px; line-height: 28px; padding-left: 15px; background: #fff; border-bottom: 1px solid #7e8a92; }
.setbody { padding: 7px 0 0 17px; }
.setbar { height: 23px; background: #dcdcdc; border: 1px solid #c5c9cc; }
.setbody.tex { display: flex; align-items: center; padding: 2px 0 0 21px; }
.texval { background: #eef3f7; padding: 3px 0 0 2px; border-top: 1px solid #7e8a92; border-left: 1px solid #7e8a92; }
```
